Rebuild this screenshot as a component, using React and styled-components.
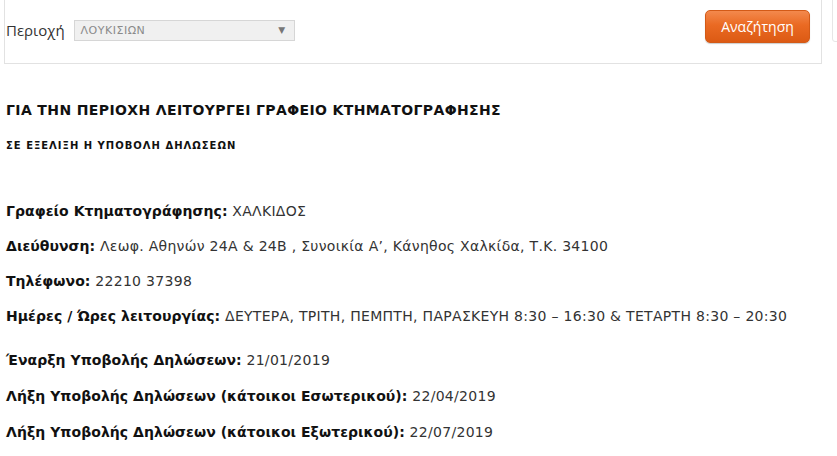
import React from 'react';
import styled, { createGlobalStyle } from 'styled-components';

const Global = createGlobalStyle`
  html, body {
    margin: 0;
    padding: 0;
    background: #fff;
  }
  body {
    font-family: "DejaVu Sans", Verdana, sans-serif;
    color: #222;
    overflow: hidden;
  }
`;

const Page = styled.div`
  position: relative;
  width: 837px;
  height: 456px;
  overflow: hidden;
`;

const SidePanel = styled.div`
  position: absolute;
  left: 832px;
  top: -10px;
  width: 20px;
  height: 50px;
  border: 1px solid #e6e6e6;
  border-radius: 3px;
`;

const SearchBar = styled.div`
  display: flex;
  align-items: center;
  justify-content: space-between;
  margin: -10px 0 0 4px;
  width: 818px;
  height: 74px;
  box-sizing: border-box;
  border: 1px solid #e2e2e2;
  padding: 6px 11px 0 1px;
`;

const Field = styled.label`
  display: flex;
  align-items: center;
  gap: 9px;
  font-family: "Open Sans", sans-serif;
  font-size: 15px;
  color: #333;
`;

const Select = styled.div`
  display: flex;
  align-items: center;
  justify-content: space-between;
  width: 221px;
  height: 21px;
  box-sizing: border-box;
  padding: 0 8px 0 6px;
  background: #f0f0f0;
  border: 1px solid #d6d6d6;
  font-family: "DejaVu Sans", sans-serif;
  font-size: 11px;
  color: #8a8a8a;
  letter-spacing: 0.5px;
`;

const Arrow = styled.span`
  font-size: 9px;
  color: #777;
`;

const Button = styled.button`
  width: 105px;
  height: 33px;
  border: 1px solid #d35a17;
  border-radius: 5px;
  background: linear-gradient(#f3894d 0%, #ea6a23 45%, #dc5a14 100%);
  box-shadow: 0 1px 1px rgba(0, 0, 0, 0.2);
  color: #fff;
  font-family: "Open Sans", sans-serif;
  font-size: 14px;
  margin-top: -7px;
  padding: 0;
`;

const Content = styled.div`
  padding: 38px 0 0 6px;
`;

const Title = styled.h2`
  margin: 0;
  font-size: 14px;
  font-weight: bold;
  letter-spacing: 0.38px;
  color: #111;
  line-height: 16px;
  white-space: nowrap;
`;

const Sub = styled.h4`
  margin: 22px 0 0;
  font-size: 10px;
  font-weight: bold;
  letter-spacing: 1px;
  color: #111;
  line-height: 12px;
  white-space: nowrap;
`;

const Info = styled.div`
  display: flex;
  flex-direction: column;
  gap: ${p => p.$gap}px;
  margin-top: ${p => p.$top}px;
`;

const Row = styled.p`
  margin: 0;
  font-size: 14px;
  letter-spacing: 0.3px;
  line-height: 17px;
  color: #333;
  white-space: nowrap;
  b {
    color: #111;
    letter-spacing: 0.05px;
  }
`;

const first = [
  ['Γραφείο Κτηματογράφησης:', 'ΧΑΛΚΙΔΟΣ'],
  ['Διεύθυνση:', 'Λεωφ. Αθηνών 24Α & 24Β , Συνοικία Α’, Κάνηθος Χαλκίδα, Τ.Κ. 34100'],
  ['Τηλέφωνο:', '22210 37398'],
  ['Ημέρες / Ώρες λειτουργίας:', 'ΔΕΥΤΕΡΑ, ΤΡΙΤΗ, ΠΕΜΠΤΗ, ΠΑΡΑΣΚΕΥΗ 8:30 – 16:30 & ΤΕΤΑΡΤΗ 8:30 – 20:30'],
];

const second = [
  ['Έναρξη Υποβολής Δηλώσεων:', '21/01/2019'],
  ['Λήξη Υποβολής Δηλώσεων (κάτοικοι Εσωτερικού):', '22/04/2019'],
  ['Λήξη Υποβολής Δηλώσεων (κάτοικοι Εξωτερικού):', '22/07/2019'],
];

export default function App() {
  return (
    <Page>
      <Global />
      <SidePanel />
      <SearchBar>
        <Field>
          Περιοχή
          <Select>
            ΛΟΥΚΙΣΙΩΝ
            <Arrow>▼</Arrow>
          </Select>
        </Field>
        <Button>Αναζήτηση</Button>
      </SearchBar>
      <Content>
        <Title>ΓΙΑ ΤΗΝ ΠΕΡΙΟΧΗ ΛΕΙΤΟΥΡΓΕΙ ΓΡΑΦΕΙΟ ΚΤΗΜΑΤΟΓΡΑΦΗΣΗΣ</Title>
        <Sub>ΣΕ ΕΞΕΛΙΞΗ Η ΥΠΟΒΟΛΗ ΔΗΛΩΣΕΩΝ</Sub>
        <Info $top={51} $gap={18}>
          {first.map(([k, v]) => (
            <Row key={k}><b>{k}</b> {v}</Row>
          ))}
        </Info>
        <Info $top={27} $gap={19}>
          {second.map(([k, v]) => (
            <Row key={k}><b>{k}</b> {v}</Row>
          ))}
        </Info>
      </Content>
    </Page>
  );
}
